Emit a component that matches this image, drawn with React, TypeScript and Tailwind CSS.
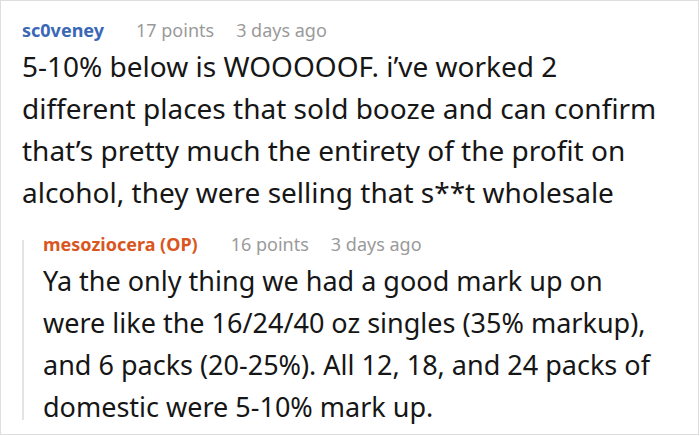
import React from "react";

export default function App() {
  return (
    <div className="w-[700px] h-[436px] bg-white" style={{ fontFamily: '"Noto Sans", "Open Sans", sans-serif' }}>
      <div className="w-[699px] h-[435px] border border-[#dedede] pl-[21px] pt-[17px] text-[#161616]">
        <div className="flex items-baseline text-[18px] leading-[24px]">
          <span className="font-bold text-[#3a68b6]">sc0veney</span>
          <span className="ml-[32px] text-[#9a9a9a]">17 points</span>
          <span className="ml-[22px] text-[#9a9a9a]">3 days ago</span>
        </div>
        <div className="mt-[3px] text-[28px] leading-[42px] w-[670px]">
          <div>5-10% below is WOOOOOF. i’ve worked 2</div>
          <div>different places that sold booze and can confirm</div>
          <div>that’s pretty much the entirety of the profit on</div>
          <div>alcohol, they were selling that s**t wholesale</div>
        </div>
        <div className="mt-[19px] flex">
          <div className="w-[2px] bg-[#e4e4e4] my-[8px] shrink-0" />
          <div className="pl-[19px]">
            <div className="flex items-baseline text-[18px] leading-[24px]">
              <span className="font-bold text-[#d9561f]">mesoziocera (OP)</span>
              <span className="ml-[33px] text-[#9a9a9a]">16 points</span>
              <span className="ml-[22px] text-[#9a9a9a]">3 days ago</span>
            </div>
            <div className="mt-[4px] text-[27px] leading-[42px]">
              <div>Ya the only thing we had a good mark up on</div>
              <div>were like the 16/24/40 oz singles (35% markup),</div>
              <div>and 6 packs (20-25%). All 12, 18, and 24 packs of</div>
              <div>domestic were 5-10% mark up.</div>
            </div>
          </div>
        </div>
      </div>
    </div>
  );
}
